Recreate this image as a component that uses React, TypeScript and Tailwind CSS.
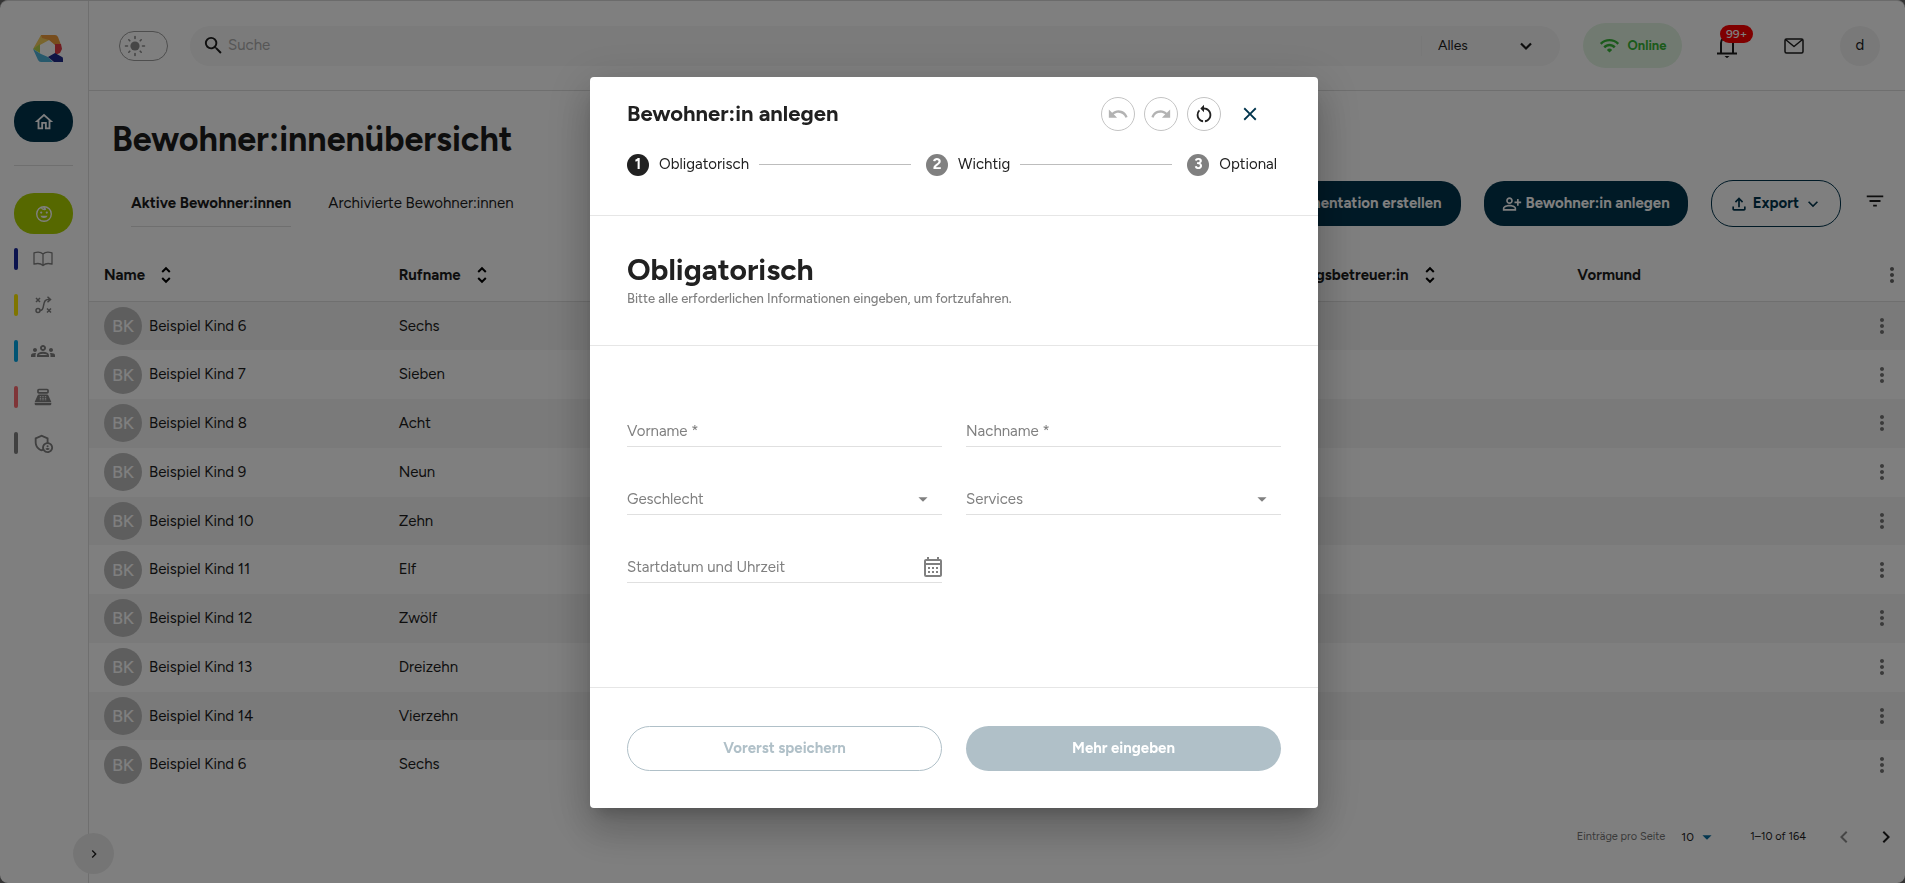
import { useState } from "react"
import {
    MdArrowDropDown,
    MdChevronLeft,
    MdChevronRight,
    MdClose,
    MdExpandMore,
    MdFilterList,
    MdMoreVert,
    MdOutlineAdminPanelSettings,
    MdOutlineCalendarMonth,
    MdOutlineFileUpload,
    MdOutlineGroups,
    MdOutlineHome,
    MdOutlinePersonAddAlt,
    MdPointOfSale,
    MdRedo,
    MdRestartAlt,
    MdSearch,
    MdUndo,
    MdWifi,
} from "react-icons/md"

const residents = [
    { name: "Beispiel Kind 6", nick: "Sechs" },
    { name: "Beispiel Kind 7", nick: "Sieben" },
    { name: "Beispiel Kind 8", nick: "Acht" },
    { name: "Beispiel Kind 9", nick: "Neun" },
    { name: "Beispiel Kind 10", nick: "Zehn" },
    { name: "Beispiel Kind 11", nick: "Elf" },
    { name: "Beispiel Kind 12", nick: "Zwölf" },
    { name: "Beispiel Kind 13", nick: "Dreizehn" },
    { name: "Beispiel Kind 14", nick: "Vierzehn" },
    { name: "Beispiel Kind 6", nick: "Sechs" },
]

const Logo = () => (
    <svg width="30" height="27" viewBox="0 0 30 27">
        <path d="M0 14 8 0h4l6 4-11 6z" fill="#f2cb5c" />
        <path d="M8 0h14q2 0 3 2l3 8h-6l-6-5-7-2z" fill="#ee9a3a" />
        <path d="M22 9h6l1 5-2 4-5 2z" fill="#e03a44" />
        <path d="M0 14 7 9v9z" fill="#b5d34c" />
        <path d="M0 14l8 5 7 3 5 5H8q-2 0-3-2z" fill="#4fb3d9" />
        <path d="M15 22l7-4 7 4q1 0 1 2v3H21z" fill="#1f2a8a" />
    </svg>
)

const SunIcon = () => (
    <svg width="22" height="22" viewBox="0 0 22 22" fill="none" stroke="#8c8c8c" strokeWidth="1.6" strokeLinecap="round">
        <circle cx="11" cy="11" r="4.6" fill="#8c8c8c" stroke="none" />
        <path d="M11 1.5v2M11 18.5v2M1.5 11h2M18.5 11h2M4.8 4.8l1 1M16.2 16.2l1 1M4.8 17.2l1-1M16.2 5.8l1-1" />
    </svg>
)

const ChildIcon = () => (
    <svg width="18" height="18" viewBox="0 0 18 18" fill="none" stroke="currentColor" strokeWidth="1.4">
        <circle cx="9" cy="9" r="7.3" />
        <path d="M6 2.2c1 2 3 2.6 5 2M9 1.8c0 1.4.8 1.8 1.6 1.6" />
        <path d="M5.4 10.8h7.2a3.7 3 0 0 1-7.2 0z" fill="currentColor" stroke="none" />
        <circle cx="6.2" cy="7.6" r="1.1" fill="currentColor" stroke="none" />
        <circle cx="11.8" cy="7.6" r="1.1" fill="currentColor" stroke="none" />
    </svg>
)

const BookIcon = () => (
    <svg width="20" height="16" viewBox="0 0 20 16" fill="none" stroke="currentColor" strokeWidth="1.3" strokeLinejoin="round">
        <path d="M10 3C8 1 4 .8 1 1.8v11.4c3-1 7-.6 9 1.3 2-1.9 6-2.3 9-1.3V1.8C16 .8 12 1 10 3zM10 3v11.5" />
    </svg>
)

const TacticIcon = () => (
    <svg width="17" height="18" viewBox="0 0 17 18" fill="none" stroke="currentColor" strokeWidth="1.5">
        <path d="M1 2l4 4M5 2L1 6M12 12.5l4 4M16 12.5l-4 4" />
        <circle cx="3" cy="14.5" r="2" />
        <path d="M5 14.5c6 0 1-11 8-11h2.5M12.5.8l3 2.7-3 2.7" />
    </svg>
)

const BellIcon = () => (
    <svg width="20" height="24" viewBox="0 0 20 24" fill="none" stroke="currentColor" strokeWidth="2">
        <path d="M4 19V9a6 6 0 0 1 12 0v10M10 3V1M0 19.5h20" />
        <path d="M7.5 22h5L10 24.2z" fill="currentColor" stroke="none" />
    </svg>
)

const MailIcon = () => (
    <svg width="20" height="16" viewBox="0 0 20 16" fill="none" stroke="currentColor" strokeWidth="1.5" strokeLinejoin="round">
        <rect x="1" y="1" width="18" height="14" rx="1.5" />
        <path d="M1.5 1.5L10 8.5l8.5-7" />
    </svg>
)

const SortIcon = () => (
    <svg width="20" height="20" viewBox="0 0 20 20" fill="none" stroke="#000" strokeWidth="2">
        <path d="M6.2 7L10 3.200 13.800 7M6.200 13l3.800 3.800 3.800-3.800" />
    </svg>
)

const ChevronIcon = () => (
    <svg width="22" height="22" viewBox="0 0 22 22" fill="none" stroke="currentColor" strokeWidth="2.200">
        <path d="M6 8.500l5 5 5-5" />
    </svg>
)

const navItems = [
    { bar: "bg-[#17269c]", label: "Dokumentation", icon: <BookIcon /> },
    { bar: "bg-[#ffea00]", label: "Planung", icon: <TacticIcon /> },
    { bar: "bg-[#00a6e6]", label: "Gruppen", icon: <MdOutlineGroups size={24} /> },
    { bar: "bg-[#ff6b70]", label: "Kasse", icon: <MdPointOfSale size={20} /> },
    { bar: "bg-[#808080]", label: "Verwaltung", icon: <MdOutlineAdminPanelSettings size={22} /> },
]

const Sidebar = () => (
    <aside className="relative flex w-[89px] shrink-0 flex-col border-r border-[#dedede] pl-[14px]">
        <a href="#start" className="mt-[34px] ml-[19px] w-[30px]" aria-label="Start">
            <Logo />
        </a>
        <a href="#home" aria-label="Home" className="mt-[39px] flex h-[41px] w-[59px] items-center justify-center rounded-[20px] bg-[#00344d] text-white">
            <MdOutlineHome size={22} />
        </a>
        <hr className="mt-[23px] w-[59px] border-[#dedede]" />
        <a href="#bewohner" aria-label="Bewohner" className="mt-[27px] flex h-[41px] w-[59px] items-center justify-center rounded-[20px] bg-[#acd000] text-white">
            <ChildIcon />
        </a>
        <nav className="mt-[2px] flex flex-col">
            {navItems.map((item) => (
                <a key={item.label} href="#nav" aria-label={item.label} className="flex h-[46px] items-center text-[#808080]">
                    <span className={`h-[22px] w-1 rounded-full ${item.bar}`} />
                    <span className="flex w-[50px] justify-center">{item.icon}</span>
                </a>
            ))}
        </nav>
        <button type="button" aria-label="Menü öffnen" className="absolute -right-[26px] bottom-[9px] flex h-[41px] w-[41px] items-center justify-center rounded-full bg-[#ebebeb]">
            <MdChevronRight size={16} />
        </button>
    </aside>
)

const Header = () => (
    <header className="flex h-[90px] items-center border-b border-[#dedede] pr-[25px] pl-[30px]">
        <button type="button" aria-label="Farbmodus" className="mr-[22px] flex h-[30px] w-[49px] items-center rounded-full border border-[#9c9c9c] pl-1">
            <SunIcon />
        </button>
        <div className="flex h-10 flex-1 items-center rounded-full bg-[#f6f6f6] pl-3">
            <MdSearch size={23} />
            <input type="search" aria-label="Suche" placeholder="Suche" className="ml-[3px] flex-1 text-[15px] outline-0 placeholder:text-[#adadad]" />
            <label className="flex h-5 items-center border-l border-[#f0f0f0] pr-[23px] pl-4">
                <select aria-label="Bereich" className="w-[77px] appearance-none text-sm outline-0">
                    <option>Alles</option>
                </select>
                <ChevronIcon />
            </label>
        </div>
        <div className="ml-[23px] flex h-[45px] w-[99px] items-center justify-center gap-2 rounded-full bg-[#e2f5e2] text-[13px] font-bold text-[#37b537]">
            <MdWifi size={21} />
            Online
        </div>
        <button type="button" aria-label="Benachrichtigungen" className="relative ml-[23px] flex w-[43px] justify-center">
            <BellIcon />
            <span className="absolute -top-[9px] left-[15px] flex h-[18px] items-center rounded-full bg-[#ff0000] px-[6px] text-xs font-medium text-white">99+</span>
        </button>
        <button type="button" aria-label="Nachrichten" className="ml-[22px] flex w-12 justify-center">
            <MailIcon />
        </button>
        <button type="button" className="ml-[22px] h-10 w-10 rounded-full bg-[#f3f3f3] text-[15px]">d</button>
    </header>
)

const Toolbar = () => {
    const [tab, setTab] = useState("aktiv")

    return (
        <div className="mt-5 flex items-center pr-[19px] pl-[42px]">
            <div className="flex flex-1 gap-[37px] text-[15px]">
                <button
                    type="button"
                    className={`h-[46px] border-b ${tab === "aktiv" ? "border-[#dedede] font-bold" : "border-transparent"}`}
                    onClick={() => setTab("aktiv")}
                >
                    Aktive Bewohner:innen
                </button>
                <button
                    type="button"
                    className={`h-[46px] border-b ${tab === "archiv" ? "border-[#dedede] font-bold" : "border-transparent"}`}
                    onClick={() => setTab("archiv")}
                >
                    Archivierte Bewohner:innen
                </button>
            </div>
            <div className="flex items-center gap-[23px] text-[15px] font-bold">
                <button type="button" className="h-[45px] rounded-[20px] bg-[#00344d] px-[19px] text-white">
                    Dokumentation erstellen
                </button>
                <button type="button" className="flex h-[45px] items-center gap-1 rounded-[20px] bg-[#00344d] px-[18px] text-white">
                    <MdOutlinePersonAddAlt size={20} />
                    Bewohner:in anlegen
                </button>
                <button type="button" className="flex h-[47px] items-center gap-1 rounded-[22px] border border-[#00344d] px-[17px] text-[#00344d]">
                    <MdOutlineFileUpload size={20} />
                    Export
                    <MdExpandMore size={20} />
                </button>
                <button type="button" aria-label="Filter" className="-mt-[6px]">
                    <MdFilterList size={22} />
                </button>
            </div>
        </div>
    )
}

const SortHead = ({ label }: { label: string }) => (
    <th className="pt-[2px] pl-[15px]">
        <span className="flex items-center gap-[11px]">
            {label}
            <SortIcon />
        </span>
    </th>
)

const ResidentTable = () => (
    <table className="mt-[21px] h-[541px] w-full table-fixed text-left text-[15px]">
        <thead>
            <tr className="h-[53px] border-b border-[#dedede]">
                <SortHead label="Name" />
                <SortHead label="Rufname" />
                <th />
                <th />
                <SortHead label="Bezugsbetreuer:in" />
                <th className="pt-[2px] pl-[15px]">Vormund</th>
                <th className="w-12 pt-[2px]">
                    <button type="button" aria-label="Spalten" className="flex w-full justify-end pr-px text-[#666]">
                        <MdMoreVert size={24} />
                    </button>
                </th>
            </tr>
        </thead>
        <tbody>
            {residents.map((r, i) => (
                <tr key={i} className="odd:bg-[#f5f5f5]">
                    <td className="pl-[15px]">
                        <span className="flex items-center gap-[7px]">
                            <span className="flex h-[38px] w-[38px] items-center justify-center rounded-full bg-[#bdbdbd] text-lg font-medium text-white">BK</span>
                            {r.name}
                        </span>
                    </td>
                    <td className="pl-[15px]">{r.nick}</td>
                    <td />
                    <td />
                    <td />
                    <td />
                    <td>
                        <button type="button" aria-label="Aktionen" className="flex w-full justify-end pr-[11px] text-[#757575]">
                            <MdMoreVert size={24} />
                        </button>
                    </td>
                </tr>
            ))}
        </tbody>
    </table>
)

const Pagination = () => (
    <footer className="mt-7 flex h-10 items-center justify-end pr-[7px] text-[11px]">
        <label htmlFor="page-size" className="mr-4 text-[#757575]">Einträge pro Seite</label>
        <select id="page-size" className="w-[15px] appearance-none text-xs outline-0">
            <option>10</option>
        </select>
        <MdArrowDropDown size={22} className="text-[#0a6ea0]" />
        <span className="mr-[26px] ml-8">1–10 of 164</span>
        <button type="button" aria-label="Zurück" className="mr-[18px] text-[#8c8c8c]">
            <MdChevronLeft size={24} />
        </button>
        <button type="button" aria-label="Weiter">
            <MdChevronRight size={24} />
        </button>
    </footer>
)

const steps = ["Obligatorisch", "Wichtig", "Optional"]

const Stepper = () => (
    <ol className="mt-[22px] flex items-center pr-1 text-[15px]">
        {steps.map((step, i) => (
            <li key={step} className={i < steps.length - 1 ? "flex flex-auto items-center" : "flex items-center"}>
                <span className={`flex h-[22px] w-[22px] items-center justify-center rounded-full font-bold text-white ${i === 0 ? "bg-[#212121]" : "bg-[#808080]"}`}>
                    {i + 1}
                </span>
                <span className="ml-[10px]">{step}</span>
                {i < steps.length - 1 && <span className="mr-[15px] ml-[10px] h-px flex-1 bg-[#bdbdbd]" />}
            </li>
        ))}
    </ol>
)

const fieldClass = "flex h-[32px] items-center border-b border-[#e0e0e0] pt-[2px] text-[#808080]"

const TextField = ({ id, label }: { id: string; label: string }) => (
    <div className={fieldClass}>
        <label htmlFor={id}>{label}</label>
        <input id={id} type="text" required className="min-w-0 flex-1 pl-2 outline-0" />
    </div>
)

const SelectField = ({ id, label }: { id: string; label: string }) => (
    <div className={`${fieldClass} pr-[8px]`}>
        <label htmlFor={id}>{label}</label>
        <select id={id} className="min-w-0 flex-1 appearance-none outline-0" />
        <MdArrowDropDown size={22} />
    </div>
)

const CreateDialog = ({ onClose }: { onClose: () => void }) => {
    const round = "flex h-[34px] w-[34px] items-center justify-center rounded-full border border-[#c4c4c4]"

    return (
        <div className="fixed inset-0 flex items-center justify-center bg-black/50 pt-[2px] pl-[3px]">
            <div
                role="dialog"
                aria-labelledby="dialog-title"
                className="w-full max-w-[728px] rounded-[4px] bg-white text-[15px] text-[#212121] shadow-[0_11px_15px_-7px_rgba(0,0,0,0.2),0_24px_38px_3px_rgba(0,0,0,0.14),0_9px_46px_8px_rgba(0,0,0,0.12)]"
            >
                <div className="border-b border-[#e6e6e6] px-[37px] pt-5 pb-[39px]">
                    <div className="flex items-center gap-[9px] pr-[11px]">
                        <h2 id="dialog-title" className="flex-1 text-[22px] leading-8 font-bold">Bewohner:in anlegen</h2>
                        <button type="button" aria-label="Rückgängig" className={`${round} text-[#b3b3b3]`} disabled>
                            <MdUndo size={22} />
                        </button>
                        <button type="button" aria-label="Wiederholen" className={`${round} text-[#b3b3b3]`} disabled>
                            <MdRedo size={22} />
                        </button>
                        <button type="button" aria-label="Zurücksetzen" className={round}>
                            <MdRestartAlt size={22} />
                        </button>
                        <button type="button" aria-label="Schließen" className="flex h-[34px] w-10 items-center justify-center text-[#00344d]" onClick={onClose}>
                            <MdClose size={22} />
                        </button>
                    </div>
                    <Stepper />
                </div>
                <div className="border-b border-[#e6e6e6] px-[37px] py-9">
                    <h3 className="text-3xl leading-9 font-bold">Obligatorisch</h3>
                    <p className="text-[13px] leading-[21px] font-medium text-[#808080]">Bitte alle erforderlichen Informationen eingeben, um fortzufahren.</p>
                </div>
                <form className="grid grid-cols-2 gap-x-6 gap-y-9 px-[37px] pt-[69px] pb-[104px]">
                    <TextField id="vorname" label="Vorname *" />
                    <TextField id="nachname" label="Nachname *" />
                    <SelectField id="geschlecht" label="Geschlecht" />
                    <SelectField id="services" label="Services" />
                    <div className={fieldClass}>
                        <label htmlFor="start">Startdatum und Uhrzeit</label>
                        <input id="start" type="text" className="min-w-0 flex-1 pl-2 outline-0" />
                        <MdOutlineCalendarMonth size={24} className="-mr-[3px]" />
                    </div>
                </form>
                <div className="grid grid-cols-2 gap-x-6 border-t border-[#e6e6e6] px-[37px] pt-[38px] pb-[37px] font-bold">
                    <button type="button" className="h-[45px] rounded-full border border-[#b0c0c8] text-[#b0c0c8]" disabled>
                        Vorerst speichern
                    </button>
                    <button type="button" className="h-[45px] rounded-full bg-[#b0c0c8] text-white" disabled>
                        Mehr eingeben
                    </button>
                </div>
            </div>
        </div>
    )
}

const App = () => {
    const [open, setOpen] = useState(true)

    return (
        <div className="min-h-dvh bg-[#6b6b6b] font-['Figtree','Lato',sans-serif] text-[#1c1c1c]">
            <div className="flex min-h-dvh overflow-hidden rounded-lg border-t border-[#d6d6d6] bg-white">
                <Sidebar />
                <main className="min-w-0 flex-1">
                    <Header />
                    <h1 className="mt-[29px] ml-[23px] text-[34px] leading-10 font-bold">Bewohner:innenübersicht</h1>
                    <Toolbar />
                    <ResidentTable />
                    <Pagination />
                </main>
            </div>
            {open && <CreateDialog onClose={() => setOpen(false)} />}
        </div>
    )
}

export default App
